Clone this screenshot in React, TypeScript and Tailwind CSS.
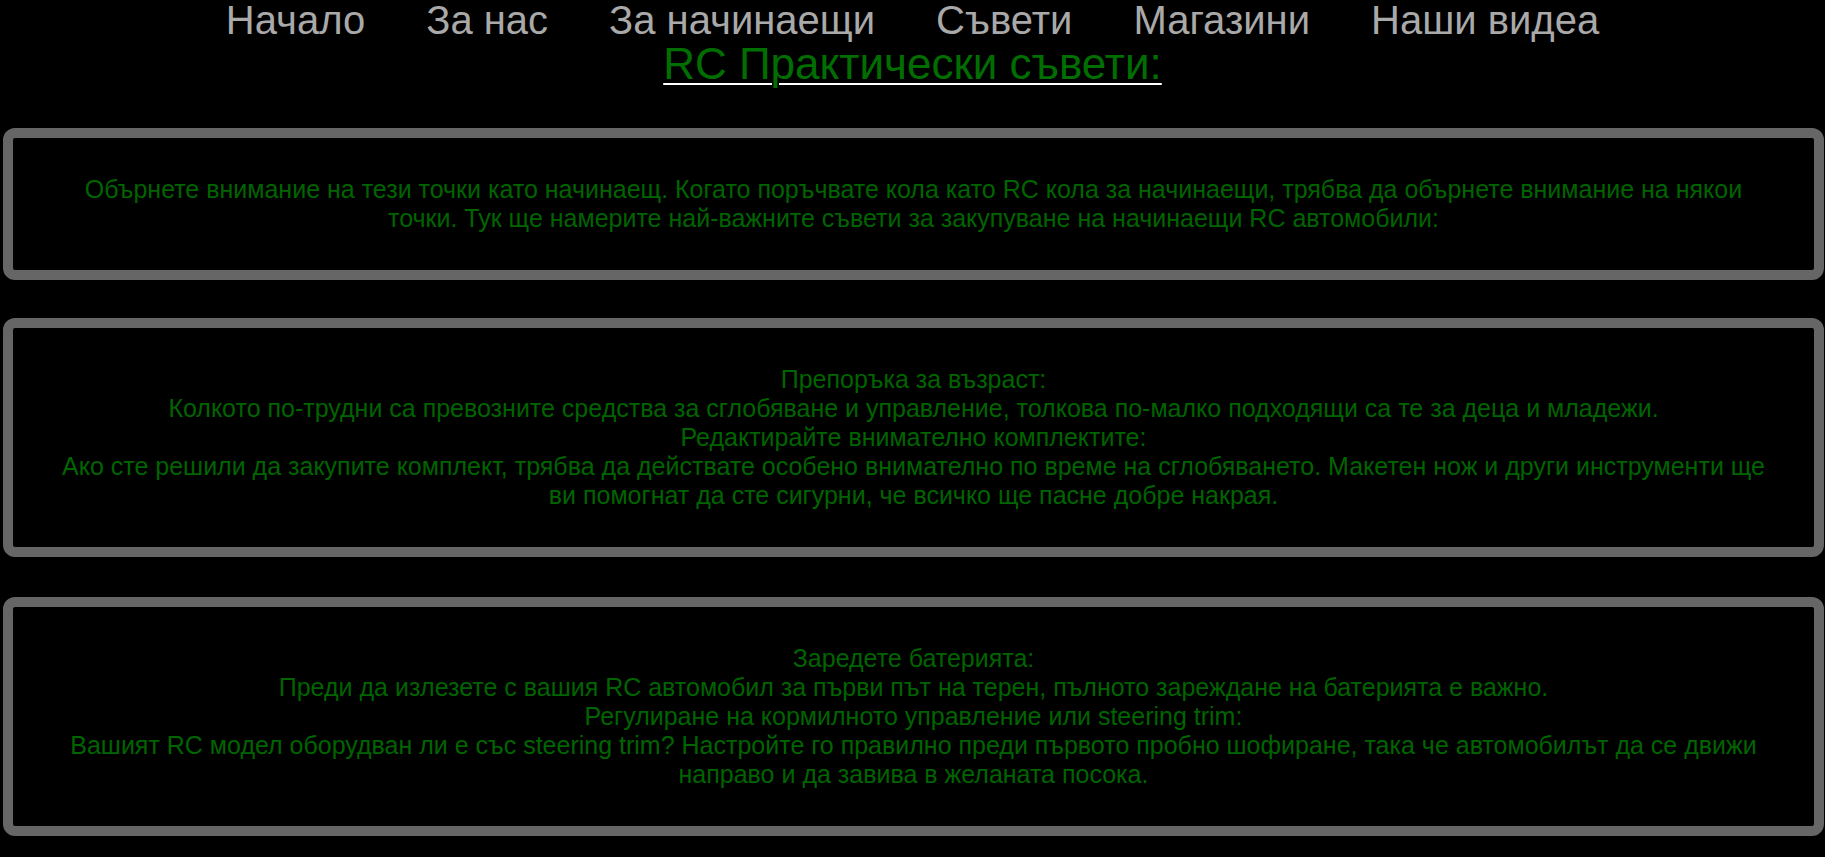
import React from 'react';

const navItems = ['Начало', 'За нас', 'За начинаещи', 'Съвети', 'Магазини', 'Наши видеа'];

const TipBox: React.FC<{ lines: string[]; className?: string }> = ({ lines, className }) => {
  return (
    <div
      className={`ml-[3px] mr-[1px] rounded-[12px] border-[10px] border-[#666666] bg-black px-[42px] py-[37px] text-center text-[25px] leading-[29px] text-[#006400] ${className ?? ''}`}
    >
      {lines.map((line, i) => (
        <p key={i}>{line}</p>
      ))}
    </div>
  );
};

const App: React.FC = () => {
  return (
    <div className="min-h-screen bg-black font-['Liberation_Sans',Arial,sans-serif]">
      {/* Top navigation */}
      <nav className="flex justify-center gap-[61px] text-[40px] leading-[40px] text-[#a9a9a9]">
        {navItems.map((item) => (
          <a key={item} href="#" className="whitespace-nowrap">
            {item}
          </a>
        ))}
      </nav>

      {/* Title */}
      <h1 className="text-center text-[44px] leading-[47px]">
        <a href="#" className="text-[#006e00] underline decoration-white decoration-2 underline-offset-[4px]">
          RC Практически съвети:
        </a>
      </h1>

      <div className="pt-[41px] pb-[21px]">
        <TipBox
          lines={[
            'Обърнете внимание на тези точки като начинаещ. Когато поръчвате кола като RC кола за начинаещи, трябва да обърнете внимание на някои точки. Тук ще намерите най-важните съвети за закупуване на начинаещи RC автомобили:',
          ]}
        />
        <TipBox
          className="mt-[38px]"
          lines={[
            'Препоръка за възраст:',
            'Колкото по-трудни са превозните средства за сглобяване и управление, толкова по-малко подходящи са те за деца и младежи.',
            'Редактирайте внимателно комплектите:',
            'Ако сте решили да закупите комплект, трябва да действате особено внимателно по време на сглобяването. Макетен нож и други инструменти ще ви помогнат да сте сигурни, че всичко ще пасне добре накрая.',
          ]}
        />
        <TipBox
          className="mt-[40px]"
          lines={[
            'Заредете батерията:',
            'Преди да излезете с вашия RC автомобил за първи път на терен, пълното зареждане на батерията е важно.',
            'Регулиране на кормилното управление или steering trim:',
            'Вашият RC модел оборудван ли е със steering trim? Настройте го правилно преди първото пробно шофиране, така че автомобилът да се движи направо и да завива в желаната посока.',
          ]}
        />
      </div>
    </div>
  );
};

export default App;
